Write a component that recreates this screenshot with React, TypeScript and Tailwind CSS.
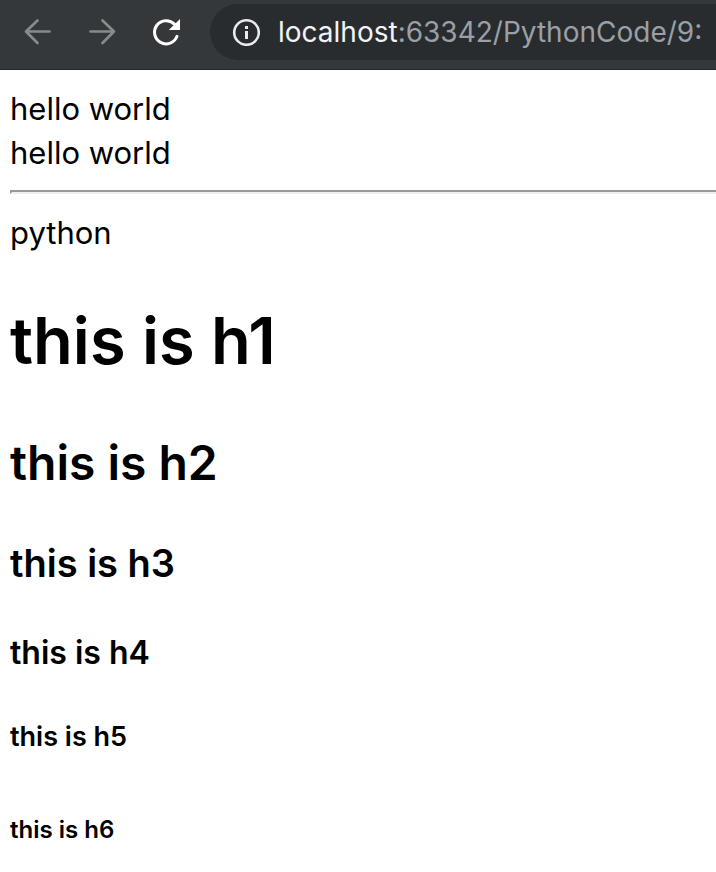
function BackIcon() {
  return (
    <svg className="size-8" viewBox="0 0 32 32" fill="none" stroke="currentColor" strokeWidth="2.7" strokeLinecap="round" strokeLinejoin="round" aria-hidden="true">
      <path d="M27.5 15.5H4M15.5 4.5L4 15.5l11.5 11.5" />
    </svg>
  );
}

function ForwardIcon() {
  return (
    <svg className="size-8" viewBox="0 0 32 32" fill="none" stroke="currentColor" strokeWidth="2.7" strokeLinecap="round" strokeLinejoin="round" aria-hidden="true">
      <path d="M4.5 15.5H28M16.5 4.5L28 15.5L16.5 27" />
    </svg>
  );
}

function ReloadIcon() {
  return (
    <svg className="size-8" viewBox="0 0 32 32" aria-hidden="true">
      <path d="M27 20.3A11.6 11.6 0 1 1 24.4 8.1L27 10.6" fill="none" stroke="currentColor" strokeWidth="3" strokeLinecap="round" />
      <path d="M30 3v11H18.8z" fill="currentColor" />
    </svg>
  );
}

function InfoIcon() {
  return (
    <svg className="size-7" viewBox="0 0 28 28" aria-hidden="true">
      <circle cx="14.5" cy="14.5" r="12.3" fill="none" stroke="currentColor" strokeWidth="2.6" />
      <path d="M13 8h3v3h-3zM13 13h3v8h-3z" fill="currentColor" />
    </svg>
  );
}

export default function App() {
  return (
    <div className="min-h-screen overflow-hidden bg-white font-['Inter','Liberation_Sans',sans-serif] text-black">
      <header className="flex h-[70px] items-start border-b border-[#26292b] bg-[#35383b] pt-1 pl-[22px]">
        <nav aria-label="Navigation" className="flex h-14 shrink-0 items-center gap-8 text-[#888a8c]">
          <button type="button" aria-label="Back"><BackIcon /></button>
          <button type="button" aria-label="Forward"><ForwardIcon /></button>
          <button type="button" aria-label="Reload" className="text-white"><ReloadIcon /></button>
        </nav>
        <div className="ml-7 flex h-14 min-w-0 flex-1 items-center gap-[18px] overflow-hidden rounded-l-full bg-[#292c2f] pl-[22px]">
          <button type="button" aria-label="Site information" className="shrink-0 text-[#e8eaed]"><InfoIcon /></button>
          <div role="textbox" aria-label="Address" tabIndex={0} className="text-[28px] leading-9 whitespace-nowrap text-[#9aa0a6]">
            <span className="text-[#f1f3f4]">localhost</span>:63342/PythonCode/9:
          </div>
        </div>
      </header>
      <main className="pt-[17px] pl-[10px]">
        <p className="text-[31px] leading-11">hello world<br />hello world</p>
        <hr className="mt-[15px] mb-[17px] h-1 border-t-2 border-b-2 border-l-2 border-t-[#999] border-b-[#eee] border-l-[#999]" />
        <p className="text-[31px] leading-11">python</p>
        <h1 className="mt-11 text-[65px] leading-[84px] font-semibold">this is h1</h1>
        <h2 className="mt-[47px] text-[48px] leading-[66px] font-semibold">this is h2</h2>
        <h3 className="mt-[41px] text-[38px] leading-[52px] font-semibold">this is h3</h3>
        <h4 className="mt-[42px] text-[32px] leading-11 font-semibold">this is h4</h4>
        <h5 className="mt-11 text-[27px] leading-9 font-semibold">this is h5</h5>
        <h6 className="mt-[59px] text-[24px] leading-8 font-semibold">this is h6</h6>
      </main>
    </div>
  );
}
